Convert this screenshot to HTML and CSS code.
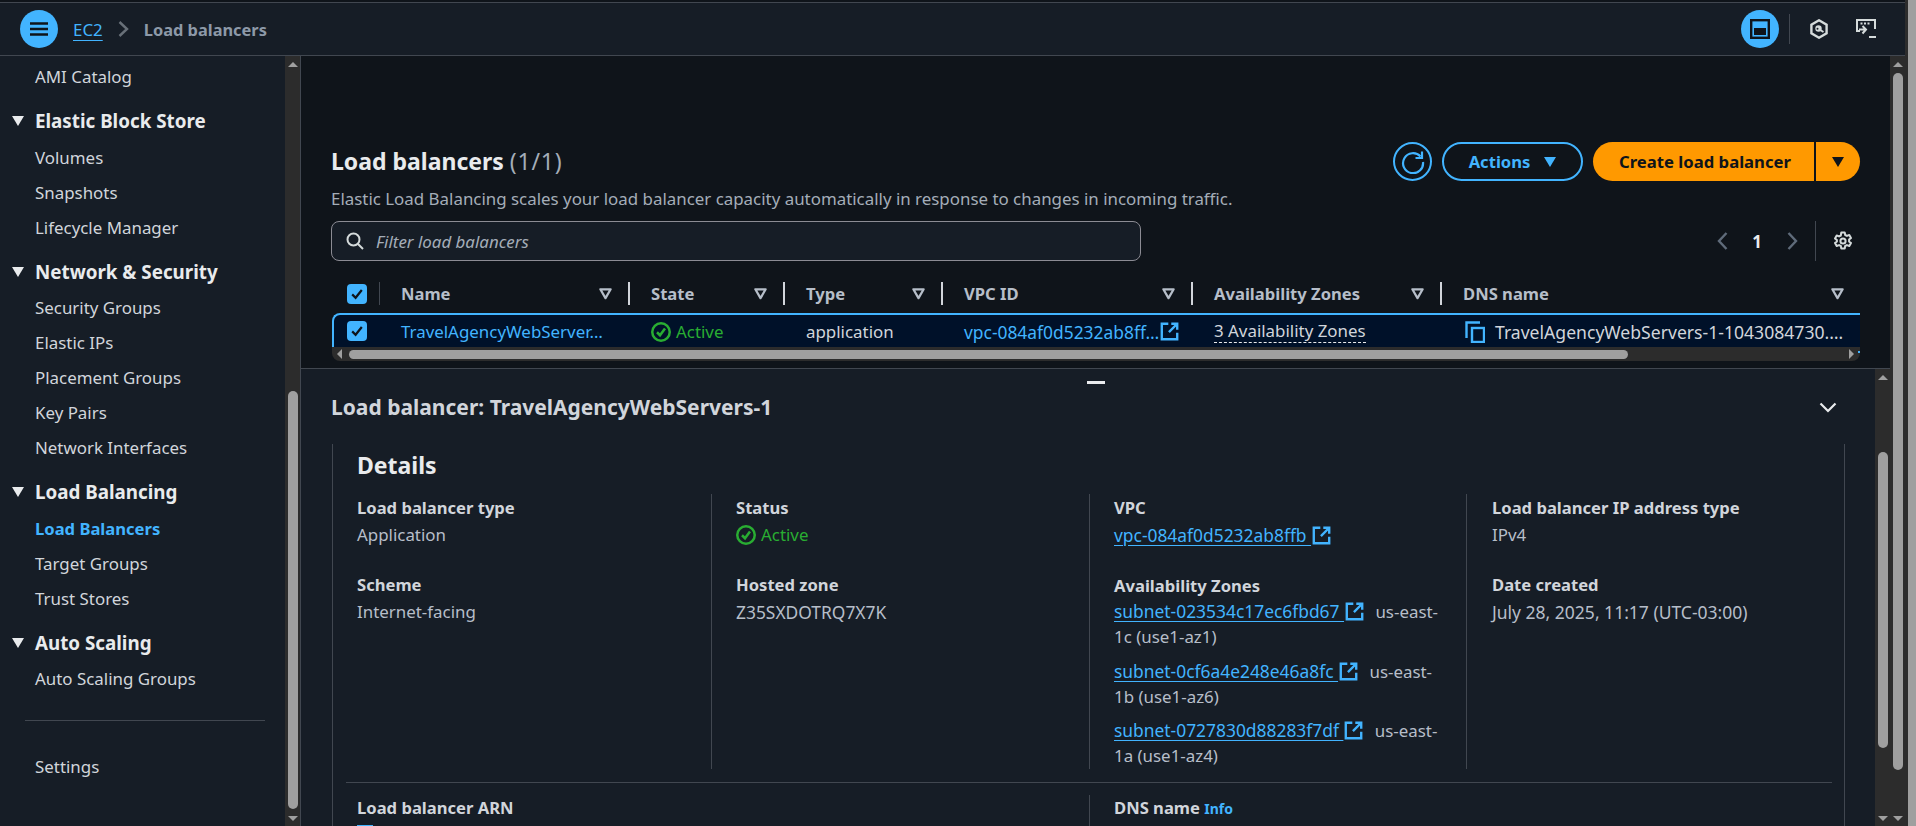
FILE: index.html
```html
<!DOCTYPE html>
<html lang="en">
<head>
<meta charset="UTF-8">
<title>Load balancers | EC2</title>
<link rel="stylesheet" href="styles.css">
</head>
<body>
<svg class="defs" width="0" height="0">
    <symbol id="ext" viewBox="0 0 16 16"><path d="M7 1.500H1.500v13h13V9M9.500 1.500h5v5M14.500 1.500 7.500 8.500" fill="none" stroke="currentColor" stroke-width="2"/></symbol>
    <symbol id="ok" viewBox="0 0 16 16"><circle cx="8" cy="8" r="7" fill="none" stroke="currentColor" stroke-width="2"/><path d="M4.800 8.200 7.200 10.600 11.200 5.200" fill="none" stroke="currentColor" stroke-width="2"/></symbol>
    <symbol id="sort" viewBox="0 0 16 16"><path d="M2.500 3.500h11L8 13z" fill="none" stroke="currentColor" stroke-width="2.400" stroke-linejoin="round"/></symbol>
    <symbol id="tick" viewBox="0 0 20 20"><rect width="20" height="20" rx="4" fill="#42b4ff"/><path d="M5.200 10.400 8.600 13.800 14.800 6" fill="none" stroke="#0f141a" stroke-width="2.200"/></symbol>
</svg>

<div class="app">
    <header class="topbar">
        <button class="menu-btn" aria-label="Menu">
            <svg width="18" height="14" viewBox="0 0 18 14"><path d="M0 1.500h18M0 7h18M0 12.500h18" stroke="#0f141a" stroke-width="2.400"/></svg>
        </button>
        <a class="crumb" href="#">EC2</a>
        <svg class="crumb-sep" width="11" height="16" viewBox="0 0 11 16"><path d="M1.500 1 9 8l-7.500 7" fill="none" stroke="#687078" stroke-width="2.400"/></svg>
        <span class="crumb-here">Load balancers</span>
        <div class="top-tools">
            <button class="panel-btn" aria-label="Panel">
                <svg width="20" height="20" viewBox="0 0 20 20"><rect x="1.200" y="1.200" width="17.600" height="17.600" fill="none" stroke="#0f141a" stroke-width="2.400"/><rect x="4" y="9" width="12" height="7" fill="#0f141a"/></svg>
            </button>
            <span class="tool-div"></span>
            <svg class="tool-icon" width="18" height="20" viewBox="0 0 18 20"><path d="M9 1.300 16.600 5.600v8.800L9 18.700 1.400 14.400V5.600z" fill="none" stroke="#d5dbdb" stroke-width="2.400"/><circle cx="8.500" cy="9.500" r="3.200" fill="#d5dbdb"/><circle cx="7.500" cy="9.800" r="1" fill="#161d26"/><path d="M9.500 10.500 13.500 13" stroke="#d5dbdb" stroke-width="2"/></svg>
            <svg class="tool-icon term" width="20" height="20" viewBox="0 0 20 20"><path d="M4 12H1V1h18v9" fill="none" stroke="#d5dbdb" stroke-width="2"/><path d="M4.500 4.500h2M8 4.500h2M11.500 4.500h2" stroke="#d5dbdb" stroke-width="1.800"/><path d="M3 10.500h6M6.500 7l3.500 3.500-3.500 4" fill="none" stroke="#d5dbdb" stroke-width="2"/><path d="M13 18h7" stroke="#d5dbdb" stroke-width="2"/></svg>
        </div>
    </header>

    <div class="workspace">
        <aside class="side">
            <nav class="nav">
                <a class="nav-item">AMI Catalog</a>
                <div class="nav-head"><i class="caret"></i>Elastic Block Store</div>
                <a class="nav-item">Volumes</a>
                <a class="nav-item">Snapshots</a>
                <a class="nav-item">Lifecycle Manager</a>
                <div class="nav-head"><i class="caret"></i>Network &amp; Security</div>
                <a class="nav-item">Security Groups</a>
                <a class="nav-item">Elastic IPs</a>
                <a class="nav-item">Placement Groups</a>
                <a class="nav-item">Key Pairs</a>
                <a class="nav-item">Network Interfaces</a>
                <div class="nav-head"><i class="caret"></i>Load Balancing</div>
                <a class="nav-item active">Load Balancers</a>
                <a class="nav-item">Target Groups</a>
                <a class="nav-item">Trust Stores</a>
                <div class="nav-head"><i class="caret"></i>Auto Scaling</div>
                <a class="nav-item">Auto Scaling Groups</a>
                <hr class="nav-rule">
                <a class="nav-item">Settings</a>
            </nav>
            <div class="sbar sbar-side"><i class="arrow-up"></i><i class="thumb"></i><i class="arrow-down"></i></div>
        </aside>

        <main class="panes">
            <section class="upper">
                <div class="title-row">
                    <div>
                        <h1 class="title">Load balancers <span class="count">(1/1)</span></h1>
                    </div>
                    <div class="actions">
                        <button class="refresh" aria-label="Refresh">
                            <svg width="24" height="24" viewBox="0 0 24 24"><path d="M19.500 6.500A10 10 0 1 0 22 12" fill="none" stroke="#42b4ff" stroke-width="2.200"/><path d="M21 1.500v6.500h-6.500" fill="none" stroke="#42b4ff" stroke-width="2.200"/></svg>
                        </button>
                        <button class="btn-outline">Actions<i class="caret caret-blue"></i></button>
                        <div class="split">
                            <button class="split-main">Create load balancer</button>
                            <button class="split-drop" aria-label="More"><i class="caret caret-dark"></i></button>
                        </div>
                    </div>
                </div>
                <p class="subtitle">Elastic Load Balancing scales your load balancer capacity automatically in response to changes in incoming traffic.</p>
                <div class="filter-row">
                    <div class="filter">
                        <svg width="18" height="18" viewBox="0 0 18 18"><circle cx="7.500" cy="7.500" r="6" fill="none" stroke="#d5dbdb" stroke-width="2"/><path d="M12 12l5 5" stroke="#d5dbdb" stroke-width="2"/></svg>
                        <span>Filter load balancers</span>
                    </div>
                    <div class="pager">
                        <svg width="11" height="18" viewBox="0 0 11 18"><path d="M9.500 1 2 9l7.500 8" fill="none" stroke="#5f6b7a" stroke-width="2.400"/></svg>
                        <b>1</b>
                        <svg width="11" height="18" viewBox="0 0 11 18"><path d="M1.500 1 9 9l-7.500 8" fill="none" stroke="#5f6b7a" stroke-width="2.400"/></svg>
                        <span class="pager-div"></span>
                        <svg class="gear" width="20" height="20" viewBox="0 0 20 20"><path d="M8.300 1.500h3.400l.5 2.500 1.700.9 2.400-.9 1.700 2.900-1.900 1.700v1.800l1.900 1.700-1.700 2.900-2.400-.9-1.700.9-.5 2.500H8.300l-.5-2.500-1.700-.9-2.400.9-1.700-2.900 1.900-1.700V9.100L2 7.400l1.700-2.900 2.400.9 1.700-.9z" fill="none" stroke="#d5dbdb" stroke-width="2" stroke-linejoin="round"/><circle cx="10" cy="10" r="2.600" fill="none" stroke="#d5dbdb" stroke-width="2"/></svg>
                    </div>
                </div>

                <div class="table">
                    <div class="cols thead">
                        <div class="cell cell-check"><svg width="20" height="20"><use href="#tick"/></svg></div>
                        <div class="cell">Name<svg class="sort"><use href="#sort"/></svg></div>
                        <div class="cell">State<svg class="sort"><use href="#sort"/></svg></div>
                        <div class="cell">Type<svg class="sort"><use href="#sort"/></svg></div>
                        <div class="cell">VPC ID<svg class="sort"><use href="#sort"/></svg></div>
                        <div class="cell">Availability Zones<svg class="sort"><use href="#sort"/></svg></div>
                        <div class="cell cell-last">DNS name<svg class="sort"><use href="#sort"/></svg></div>
                    </div>
                    <div class="cols trow">
                        <div class="cell cell-check"><svg width="20" height="20"><use href="#tick"/></svg></div>
                        <div class="cell"><a class="link-name">TravelAgencyWebServer…</a></div>
                        <div class="cell status"><svg width="20" height="20"><use href="#ok"/></svg>Active</div>
                        <div class="cell">application</div>
                        <div class="cell"><a class="link-vpc id">vpc-084af0d5232ab8ff…</a><svg class="ext"><use href="#ext"/></svg></div>
                        <div class="cell"><span class="dashed">3 Availability Zones</span></div>
                        <div class="cell">
                            <svg class="copy" width="20" height="22" viewBox="0 0 20 22"><path d="M1.500 17V1.500H15" fill="none" stroke="#42b4ff" stroke-width="2.400"/><rect x="7" y="7" width="12" height="14" fill="none" stroke="#42b4ff" stroke-width="2.400"/></svg>
                            <span class="dns">TravelAgencyWebServers-1-1043084730.…</span>
                        </div>
                    </div>
                    <div class="hscroll">
                        <i class="arrow-left"></i><i class="hthumb"></i><i class="arrow-right"></i>
                    </div>
                </div>
            </section>

            <section class="lower">
                <div class="lower-body">
                    <div class="grip"></div>
                    <div class="lower-head">
                        <h2 class="lb-title">Load balancer: TravelAgencyWebServers-1</h2>
                        <svg width="18" height="11" viewBox="0 0 18 11"><path d="M1.500 1.500 9 9l7.500-7.500" fill="none" stroke="#e9ebed" stroke-width="2.200"/></svg>
                    </div>
                    <div class="panel">
                        <h3 class="details">Details</h3>
                        <div class="kv-grid">
                            <div class="kv-col">
                                <div class="kv"><label>Load balancer type</label><p>Application</p></div>
                                <div class="kv"><label>Scheme</label><p>Internet-facing</p></div>
                            </div>
                            <div class="kv-col">
                                <div class="kv"><label>Status</label><p class="status"><svg width="20" height="20"><use href="#ok"/></svg>Active</p></div>
                                <div class="kv"><label>Hosted zone</label><p class="id">Z35SXDOTRQ7X7K</p></div>
                            </div>
                            <div class="kv-col">
                                <div class="kv"><label>VPC</label><p><a class="link id">vpc-084af0d5232ab8ffb </a><svg class="ext"><use href="#ext"/></svg></p></div>
                                <div class="kv"><label>Availability Zones</label>
                                    <p class="zone"><a class="link id">subnet-023534c17ec6fbd67 </a><svg class="ext"><use href="#ext"/></svg> us-east-1c (use1-az1)</p>
                                    <p class="zone"><a class="link id">subnet-0cf6a4e248e46a8fc </a><svg class="ext"><use href="#ext"/></svg> us-east-1b (use1-az6)</p>
                                    <p class="zone"><a class="link id">subnet-0727830d88283f7df </a><svg class="ext"><use href="#ext"/></svg> us-east-1a (use1-az4)</p>
                                </div>
                            </div>
                            <div class="kv-col kv-col-last">
                                <div class="kv"><label>Load balancer IP address type</label><p>IPv4</p></div>
                                <div class="kv"><label>Date created</label><p class="date">July 28, 2025, 11:17 (UTC-03:00)</p></div>
                            </div>
                        </div>
                        <div class="kv-grid2">
                            <div class="kv-col"><div class="kv"><label>Load balancer ARN</label><i class="cut-icon"></i></div></div>
                            <div class="kv-col"><div class="kv"><label>DNS name <a class="info">Info</a></label><i class="cut-icon"></i></div></div>
                        </div>
                    </div>
                </div>
                <div class="sbar sbar-lower"><i class="arrow-up"></i><i class="thumb"></i><i class="arrow-down"></i></div>
            </section>
        </main>
    </div>
</div>

<div class="sbar sbar-main"><i class="arrow-up"></i><i class="thumb"></i><i class="arrow-down"></i></div>
<div class="outer-bar"><i></i></div>
</body>
</html>
```

FILE: styles.css
```css
* {
    box-sizing: border-box;
}

html, body {
    margin: 0;
    height: 100%;
    overflow: hidden;
    background: #0f141a;
}

body {
    display: flex;
    color: #d1d5db;
    font-family: "Noto Sans", sans-serif;
    font-size: 16.9px;
    position: relative;
}

.defs {
    position: absolute;
}

button {
    font-family: inherit;
    border: 0;
    padding: 0;
    background: none;
}

i {
    display: block;
}

.id {
    font-size: 17.4px;
}

.app {
    flex: 1;
    min-width: 0;
    display: flex;
    flex-direction: column;
}

/* top bar */
.topbar {
    height: 54px;
    flex: none;
    margin: 2px -15px 0 0;
    position: relative;
    display: flex;
    align-items: center;
    padding: 0 0 0 20px;
    background: #161d26;
    border-top: 1px solid #414750;
    border-bottom: 1px solid #414750;
}

.menu-btn, .panel-btn {
    width: 38px;
    height: 38px;
    border-radius: 50%;
    background: #42b4ff;
    display: flex;
    align-items: center;
    justify-content: center;
    flex: none;
}

.crumb {
    margin-left: 15px;
    color: #42b4ff;
    text-decoration: underline;
    text-underline-offset: 4px;
}

.crumb-sep {
    margin: 0 15px 0 15px;
}

.crumb-here {
    font-size: 16.4px;
    font-weight: 700;
    color: #8d99a8;
}

.top-tools {
    margin-left: auto;
    display: flex;
    align-items: center;
    padding-right: 29px;
}

.tool-div {
    width: 1px;
    height: 30px;
    background: #414750;
    margin: 0 20px 0 10px;
}

.term {
    margin-left: 28px;
}

.workspace {
    flex: 1;
    min-height: 0;
    display: flex;
}

/* side navigation */
.side {
    width: 301px;
    flex: none;
    display: flex;
    background: #161d26;
    border-right: 1px solid #414750;
}

.nav {
    flex: 1;
    overflow: hidden;
    padding: 3px 0 0 35px;
    display: flex;
    flex-direction: column;
}

.nav-item {
    height: 35px;
    flex: none;
    line-height: 35px;
    color: #d1d5db;
}

.nav-item.active {
    color: #42b4ff;
    font-size: 16.6px;
    font-weight: 700;
}

.nav-head {
    position: relative;
    height: 45.5px;
    flex: none;
    padding-top: 10px;
    line-height: 35px;
    font-size: 18.8px;
    font-weight: 700;
    color: #e9ebed;
}

.caret {
    width: 0;
    height: 0;
    border-left: 6.5px solid transparent;
    border-right: 6.5px solid transparent;
    border-top: 10px solid #e9ebed;
}

.nav-head .caret {
    position: absolute;
    left: -23px;
    top: 22px;
}

.nav-rule {
    width: 240px;
    margin: 24px 0 28px -10px;
    border: 0;
    border-top: 1px solid #414750;
    flex: none;
}

/* fake scrollbars */
.sbar {
    width: 15px;
    flex: none;
    display: flex;
    flex-direction: column;
    align-items: center;
    background: #2c2c2c;
}

.arrow-up, .arrow-down {
    width: 0;
    height: 0;
    border-left: 5px solid transparent;
    border-right: 5px solid transparent;
    flex: none;
}

.arrow-up {
    border-bottom: 5px solid #9f9f9f;
    margin-top: 6px;
}

.arrow-down {
    border-top: 5px solid #9f9f9f;
    margin-top: auto;
    margin-bottom: 5px;
}

.thumb {
    width: 10px;
    border-radius: 5px;
    background: #9f9f9f;
    flex: none;
}

.sbar-side .thumb {
    height: 418px;
    margin-top: 324px;
}

.sbar-lower .thumb {
    height: 296px;
    margin-top: 72px;
}

.sbar-main {
    height: 770px;
    margin-top: 56px;
}

.sbar-main .thumb {
    height: 697px;
    margin-top: 6px;
}

.outer-bar {
    width: 11px;
    flex: none;
    padding-left: 3px;
    background: #2c2c2c;
}

.outer-bar i {
    height: 100%;
    background: #9f9f9f;
}

/* panes */
.panes {
    flex: 1;
    min-width: 0;
    display: flex;
    flex-direction: column;
}

.upper {
    height: 313px;
    flex: none;
    padding: 86px 0 0 30px;
    border-bottom: 1px solid #414750;
    overflow: hidden;
}

.title-row {
    display: flex;
    align-items: center;
    justify-content: space-between;
    height: 39px;
    padding-right: 30px;
}

.title {
    margin: -2px 0 0;
    font-size: 23px;
    font-weight: 700;
    color: #e9ebed;
}

.count {
    font-size: 23px;
    font-weight: 400;
    letter-spacing: 0.8px;
    color: #a4adb8;
}

.subtitle {
    margin: 6px 0 0;
    line-height: 24px;
    color: #a4adb8;
}

.actions {
    display: flex;
    align-items: center;
    gap: 10px;
}

.refresh {
    width: 39px;
    height: 39px;
    border: 2px solid #42b4ff;
    border-radius: 50%;
    display: flex;
    align-items: center;
    justify-content: center;
}

.btn-outline {
    width: 141px;
    height: 39px;
    border: 2px solid #42b4ff;
    border-radius: 20px;
    color: #42b4ff;
    font-size: 16.6px;
    font-weight: 700;
    display: flex;
    align-items: center;
    justify-content: center;
    gap: 14px;
}

.caret-blue {
    border-top-color: #42b4ff;
}

.caret-dark {
    border-top-color: #0f141a;
}

.split {
    display: flex;
    gap: 2px;
}

.split-main, .split-drop {
    height: 39px;
    background: #ff9900;
    color: #0f141a;
    font-size: 16.7px;
    font-weight: 700;
}

.split-main {
    width: 221px;
    padding-left: 3px;
    border-radius: 20px 0 0 20px;
}

.split-drop {
    width: 44px;
    border-radius: 0 20px 20px 0;
    display: flex;
    align-items: center;
    justify-content: center;
}

.filter-row {
    display: flex;
    align-items: center;
    margin-top: 10px;
    height: 40px;
    padding-right: 36px;
}

.filter {
    width: 810px;
    height: 40px;
    display: flex;
    align-items: center;
    gap: 12px;
    padding-left: 14px;
    border: 1px solid #8c8c94;
    border-radius: 8px;
    background: #161d26;
    color: #a4adb8;
    font-style: italic;
}

.pager {
    margin-left: auto;
    display: flex;
    align-items: center;
    color: #e9ebed;
}

.pager b {
    width: 24px;
    margin: 0 18px 0 17px;
    text-align: center;
}

.pager-div {
    width: 1px;
    height: 40px;
    background: #414750;
    margin: 0 17px;
}

.gear {
    margin-right: 1px;
}

/* table */
.table {
    width: 1528px;
    margin: 14px 0 0 1px;
}

.cols {
    display: grid;
    grid-template-columns: 48px 250px 155px 158px 250px 249px 418px;
}

.thead {
    height: 38px;
    font-size: 16.6px;
    font-weight: 700;
    color: #b6bec9;
}

.thead .cell {
    position: relative;
    padding-right: 15px;
    border-right: 2px solid #d1d5db;
    height: 23px;
    margin-top: 7px;
}

.thead .cell-check {
    border-right: 1px solid #414750;
    padding-right: 0;
}

.thead .cell-last {
    border-right: 0;
}

.cell {
    display: flex;
    align-items: center;
    padding-left: 21px;
    min-width: 0;
    white-space: nowrap;
}

.cell-check {
    padding-left: 15px;
}

.sort {
    width: 15px;
    height: 15px;
    color: #b6bec9;
    margin-left: auto;
    flex: none;
}

.trow {
    height: 34px;
    grid-template-columns: 46px 250px 155px 158px 250px 249px 418px;
    background: #001129;
    border-top: 2px solid #42b4ff;
    border-left: 2px solid #42b4ff;
    border-top-left-radius: 8px;
    color: #d1d5db;
    overflow: hidden;
}

.trow .cell {
    padding-top: 1px;
}

.trow .cell-check {
    padding-left: 13px;
    padding-top: 0;
}

.link-name, .link-vpc {
    color: #42b4ff;
}

.status {
    color: #29ad32;
    gap: 5px;
}

.ext {
    width: 19px;
    height: 19px;
    color: #42b4ff;
    flex: none;
    vertical-align: -3px;
    margin: 0 7px 0 1px;
}

.dashed {
    border-bottom: 1px dashed #e9ebed;
    line-height: 22px;
}

.copy {
    flex: none;
    margin: 0 10px 0 2px;
}

.dns {
    font-size: 17.6px;
}

.hscroll {
    position: relative;
    height: 14px;
    display: flex;
    align-items: center;
    background: #2c2c2c;
    border-radius: 0 0 8px 8px;
}

.hscroll::after {
    content: "";
    position: absolute;
    right: 0;
    top: 4px;
    width: 2px;
    height: 2px;
    background: #42b4ff;
}

.hthumb {
    width: 1279px;
    height: 9px;
    margin-left: 7px;
    border-radius: 5px;
    background: #9f9f9f;
}

.arrow-left, .arrow-right {
    width: 0;
    height: 0;
    border-top: 5px solid transparent;
    border-bottom: 5px solid transparent;
}

.arrow-left {
    border-right: 5px solid #9f9f9f;
    margin-left: 5px;
}

.arrow-right {
    border-left: 5px solid #9f9f9f;
    margin-left: auto;
    margin-right: 6px;
}

/* lower pane */
.lower {
    flex: 1;
    min-height: 0;
    display: flex;
    background: #161d26;
}

.lower-body {
    flex: 1;
    min-width: 0;
    padding: 12px 0 0 30px;
    overflow: hidden;
}

.grip {
    width: 18px;
    height: 3px;
    background: #e9ebed;
    margin-left: 756px;
}

.lower-head {
    display: flex;
    align-items: center;
    justify-content: space-between;
    height: 46px;
    padding-right: 38px;
}

.lb-title {
    margin: 0;
    font-size: 21px;
    font-weight: 700;
    color: #d1d5db;
}

.panel {
    width: 1513px;
    margin: 14px 0 0 1px;
    padding-left: 13px;
    border: 1px solid #414750;
    border-width: 0 1px;
}

.details {
    margin: 0;
    padding-left: 11px;
    height: 50px;
    line-height: 42px;
    font-size: 23px;
    font-weight: 700;
    color: #e9ebed;
}

.kv-grid {
    display: grid;
    grid-template-columns: 365px 378px 377px 1fr;
    grid-template-rows: 275px;
}

.kv-grid2 {
    display: grid;
    grid-template-columns: 743px 1fr;
    margin: 13px 12px 0 0;
    padding-top: 12px;
    border-top: 1px solid #414750;
}

.kv-col {
    min-height: 0;
    padding: 1px 24px 0 11px;
}

.kv-col + .kv-col {
    border-left: 1px solid #414750;
    padding-left: 24px;
}

.kv-col + .kv-col-last {
    padding-left: 25px;
}

.kv-grid2 .kv-col {
    padding-top: 0;
}

.kv {
    margin-bottom: 23px;
}

.kv label {
    display: block;
    line-height: 26px;
    font-size: 16.6px;
    font-weight: 700;
    color: #d1d5db;
}

.kv p {
    margin: 0;
    line-height: 28px;
    color: #b6bec9;
}

.kv p.status {
    display: flex;
    align-items: center;
    color: #29ad32;
}

.kv p.zone {
    line-height: 25px;
    margin: 0 0 9.6px;
}

.kv p.date {
    font-size: 17.5px;
}

.link {
    color: #42b4ff;
    text-decoration: underline;
    text-underline-offset: 3px;
}

.info {
    color: #42b4ff;
    font-size: 14px;
}

.cut-icon {
    width: 16px;
    height: 8px;
    margin-top: 4px;
    background: #42b4ff;
}
```
